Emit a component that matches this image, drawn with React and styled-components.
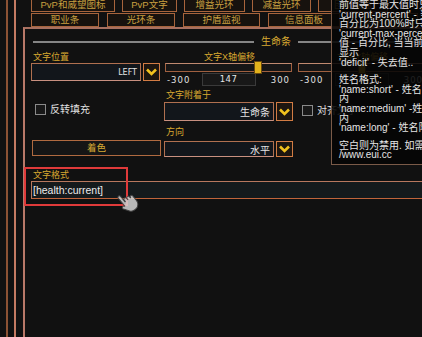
import React from 'react'
import styled, { createGlobalStyle } from 'styled-components'

const GlobalStyle = createGlobalStyle`
	html, body {
		margin: 0;
		padding: 0;
		background: #111111;
		overflow: hidden;
	}
	body {
		font-family: "Liberation Sans", "Noto Sans CJK SC", sans-serif;
	}
`

const TABS_TOP = [
	{ name: 'PvP和威望图标', w: 84 },
	{ name: 'PvP文字', w: 55 },
	{ name: '增益光环', w: 61 },
	{ name: '减益光环', w: 59 },
	{ name: '团队减益', w: 70 },
]

const TABS_BOTTOM = [
	{ name: '职业条', w: 68 },
	{ name: '光环条', w: 68 },
	{ name: '护盾监视', w: 77 },
	{ name: '信息面板', w: 72 },
	{ name: '全局设置', w: 70 },
]

const TIP_BLOCKS = [
	[
		'前值等于最大值时只显示当前值',
		"'current-percent' - 当前值",
		'百分比为100%时只显示当前值',
		"'current-max-percent' - 当前",
		'值 - 百分比, 当当前值等于最大',
		'显示',
		"'deficit' - 失去值..",
	],
	[
		'姓名格式:',
		"'name:short' - 姓名限制在10个字符",
		'内',
		"'name:medium' -姓名限制在15个字符",
		'内',
		"'name:long' - 姓名限制在20个字符内",
	],
	['空白则为禁用. 如需帮助请访问https:', '/www.eui.cc'],
]

export default function App() {
	return (
		<>
			<GlobalStyle />
			<Page>
				<RailOuter>
					<RailInner>
						<TabBlock>
							<TabRow gap={7}>
								{TABS_TOP.map(t => (
									<Tab key={t.name} w={t.w}>{t.name}</Tab>
								))}
							</TabRow>
							<TabRow gap={8}>
								{TABS_BOTTOM.map(t => (
									<Tab key={t.name} w={t.w}>{t.name}</Tab>
								))}
							</TabRow>
						</TabBlock>

						<Panel>
							<SectionHeader>
								<Rule />
								<SectionTitle>生命条</SectionTitle>
								<Rule />
							</SectionHeader>

							<Grid>
								<Field>
									<Label>文字位置</Label>
									<Dropdown value="LEFT" latin h={18} />
								</Field>
								<Slider label="文字X轴偏移" value="147" pos={71} />
								<Slider label="文字Y轴偏移" value="0" pos={48} />

								<CheckCell top={15}>
									<Box />
									<CheckText>反转填充</CheckText>
								</CheckCell>
								<Field>
									<Label>文字附着于</Label>
									<Dropdown value="生命条" h={19} gapTop={1} />
								</Field>
								<CheckCell top={16} left={5}>
									<Box />
									<CheckText>对齐文字</CheckText>
								</CheckCell>

								<ButtonCell>
									<ColorButton>着色</ColorButton>
								</ButtonCell>
								<Field>
									<Label>方向</Label>
									<Dropdown value="水平" h={16} gapTop={3} />
								</Field>
							</Grid>

							<FormatField>
								<Label>文字格式</Label>
								<TextInput>[health:current]</TextInput>
							</FormatField>
						</Panel>
					</RailInner>
				</RailOuter>

				<Highlight />
				<Cursor width="24" height="24" viewBox="0 0 24 24">
					<path
						d="M7 1.5c.9 0 1.5.7 1.5 1.6V10h.3V8.4c0-.9.7-1.5 1.5-1.5s1.5.6 1.5 1.5V10h.3V9c0-.9.7-1.5 1.5-1.5s1.5.6 1.5 1.5v1.3h.2c0-.8.7-1.4 1.4-1.4.8 0 1.4.6 1.4 1.4V16c0 3.5-2.5 6.5-6 6.5h-1.5c-2 0-3.6-1-4.6-2.6L2.5 14.6c-.5-.8-.3-1.8.4-2.2.7-.5 1.7-.3 2.2.4l.4.8V3.1C5.5 2.2 6.1 1.5 7 1.5z"
						fill="#d4d4d4"
						stroke="#444"
						strokeWidth="1"
					/>
				</Cursor>

				<Tooltip>
					{TIP_BLOCKS.map((block, i) => (
						<TipBlock key={i}>
							{block.map((line, j) => (
								<TipLine key={j}>{line}</TipLine>
							))}
						</TipBlock>
					))}
				</Tooltip>
			</Page>
		</>
	)
}

function Dropdown({ value, latin, h, gapTop }) {
	return (
		<DropRow h={h} gapTop={gapTop}>
			<DropBox>
				<DropValue latin={latin}>{value}</DropValue>
			</DropBox>
			<ArrowButton>
				<svg width="13" height="10" viewBox="0 0 13 10">
					<polyline points="2,2.5 6.5,7 11,2.5" fill="none" stroke="#f2c21e" strokeWidth="2.6" />
				</svg>
			</ArrowButton>
		</DropRow>
	)
}

function Slider({ label, value, pos }) {
	return (
		<SliderCell>
			<Label center>{label}</Label>
			<Track>
				<Thumb style={{ left: `${pos}%` }} />
			</Track>
			<NumRow>
				<Num>-300</Num>
				<ValueBox>{value}</ValueBox>
				<Num end>300</Num>
			</NumRow>
		</SliderCell>
	)
}

const Page = styled.div`
	position: relative;
	width: 422px;
	height: 337px;
	overflow: hidden;
	background: #111111;
	display: flex;
	padding-left: 6px;
	box-sizing: border-box;
`

const RailOuter = styled.div`
	display: flex;
	flex: 1;
	min-width: 0;
	border-left: 2px solid #8c5234;
	padding-left: 6px;
`

const RailInner = styled.div`
	display: flex;
	flex-direction: column;
	flex: 1;
	min-width: 0;
	border-left: 2px solid #c47a62;
	padding-left: 7px;
`

const TabBlock = styled.div`
	display: flex;
	flex-direction: column;
	margin: -2px 0 0 8px;
	gap: 1px;
`

const TabRow = styled.div`
	display: flex;
	gap: ${p => p.gap}px;
`

const Tab = styled.div`
	flex: none;
	width: ${p => p.w}px;
	height: 14px;
	box-sizing: border-box;
	border: 1px solid #a8643c;
	background: #17120e;
	color: #c9a040;
	font-size: 9.5px;
	line-height: 12px;
	text-align: center;
	white-space: nowrap;
	overflow: hidden;
`

const Panel = styled.div`
	flex: 1;
	border-left: 2px solid #b87868;
	border-top: 2px solid #a87060;
	padding: 7px 0 0 6px;
`

const SectionHeader = styled.div`
	display: flex;
	align-items: center;
	width: 486px;
	height: 12px;
	margin-left: 2px;
`

const Rule = styled.div`
	flex: 1;
	height: 2px;
	background: #858585;
`

const SectionTitle = styled.span`
	padding: 0 7px;
	color: #d9aa32;
	font-size: 10px;
	line-height: 12px;
`

const Grid = styled.div`
	display: grid;
	grid-template-columns: 130px 130px 130px;
	grid-template-rows: 38px 37px 31px;
	column-gap: 3px;
	margin-top: 3px;
`

const Field = styled.div`
	display: flex;
	flex-direction: column;
`

const Label = styled.div`
	height: 12px;
	line-height: 12px;
	font-size: 9px;
	color: #d8a830;
	white-space: nowrap;
	padding-left: 2px;
	text-align: ${p => (p.center ? 'center' : 'left')};
`

const DropRow = styled.div`
	display: flex;
	gap: 2px;
	height: ${p => p.h}px;
	margin-top: ${p => p.gapTop || 0}px;
	padding-right: 1px;
`

const DropBox = styled.div`
	flex: 1;
	display: flex;
	align-items: center;
	justify-content: flex-end;
	box-sizing: border-box;
	border: 1px solid #b07050;
	border-bottom-color: #c89080;
	background: #12161b;
	padding-right: 3px;
`

const DropValue = styled.span`
	color: #e4e4e4;
	font-family: ${p => (p.latin ? '"DejaVu Sans", sans-serif' : '"Liberation Sans", "Noto Sans CJK SC", sans-serif')};
	font-size: ${p => (p.latin ? '8px' : '10px')};
`

const ArrowButton = styled.div`
	flex: none;
	width: 17px;
	display: flex;
	align-items: center;
	justify-content: center;
	box-sizing: border-box;
	border: 1.5px solid #d27c44;
	background: #1d1610;
`

const SliderCell = styled.div`
	display: flex;
	flex-direction: column;
	padding: 0 2px 0 1px;
`

const Track = styled.div`
	position: relative;
	height: 9px;
	box-sizing: border-box;
	border: 1px solid #a06040;
	border-top-color: #c08a70;
	background: #161616;
`

const Thumb = styled.div`
	position: absolute;
	top: -2px;
	width: 6px;
	height: 11px;
	background: #e2b21c;
	box-shadow: 0 0 0 1px #6a4a10;
`

const NumRow = styled.div`
	display: grid;
	grid-template-columns: 1fr 54px 1fr;
	align-items: center;
	margin-top: 1px;
	height: 13px;
`

const Num = styled.span`
	justify-self: ${p => (p.end ? 'end' : 'start')};
	padding: 0 2px;
	font-family: "DejaVu Sans", sans-serif;
	font-size: 8.5px;
	letter-spacing: 1px;
	color: #e0e0e0;
`

const ValueBox = styled.div`
	height: 13px;
	box-sizing: border-box;
	border: 1px solid #3a3a3a;
	background: #181818;
	color: #e6e6e6;
	font-family: "DejaVu Sans", sans-serif;
	font-size: 8.5px;
	letter-spacing: 0.5px;
	line-height: 11px;
	text-align: center;
`

const CheckCell = styled.div`
	display: flex;
	align-items: center;
	align-self: start;
	gap: 4px;
	margin-top: ${p => p.top}px;
	padding-left: ${p => p.left || 4}px;
`

const Box = styled.div`
	width: 11px;
	height: 11px;
	box-sizing: border-box;
	border: 1px solid #8a8a8a;
	background: #181818;
`

const CheckText = styled.span`
	color: #e2e2e2;
	font-size: 10px;
	line-height: 11px;
	white-space: nowrap;
`

const ButtonCell = styled.div`
	display: flex;
	align-items: flex-end;
	padding-bottom: 1px;
`

const ColorButton = styled.div`
	width: 129px;
	height: 16px;
	box-sizing: border-box;
	margin-left: 1px;
	border: 1px solid #b06a40;
	background: #151515;
	color: #d8aa34;
	font-size: 9.5px;
	line-height: 14px;
	text-align: center;
`

const FormatField = styled.div`
	display: flex;
	flex-direction: column;
	margin-top: 12px;
`

const TextInput = styled.div`
	width: 600px;
	height: 18px;
	box-sizing: border-box;
	border: 1px solid #b8785e;
	border-bottom-color: #c0643a;
	background: #151a1c;
	color: #ececec;
	font-size: 10.5px;
	line-height: 16px;
	padding-left: 1px;
	white-space: nowrap;
`

const Highlight = styled.div`
	position: absolute;
	left: 24px;
	top: 167px;
	width: 104px;
	height: 39px;
	box-sizing: border-box;
	border: 2px solid #e03a3a;
	pointer-events: none;
`

const Cursor = styled.svg`
	position: absolute;
	left: 117px;
	top: 189px;
	transform: rotate(-40deg);
	opacity: 0.85;
`

const Tooltip = styled.div`
	position: absolute;
	left: 331px;
	top: -1px;
	width: 200px;
	height: 166px;
	box-sizing: border-box;
	border: 1px solid #7a5a48;
	background: rgba(4, 4, 4, 0.88);
	padding: 0 0 0 7px;
	color: #e4e4e4;
	font-size: 10px;
`

const TipBlock = styled.div`
	& + & {
		margin-top: 8px;
	}
`

const TipLine = styled.div`
	height: 9.6px;
	line-height: 9.6px;
	white-space: nowrap;
`
